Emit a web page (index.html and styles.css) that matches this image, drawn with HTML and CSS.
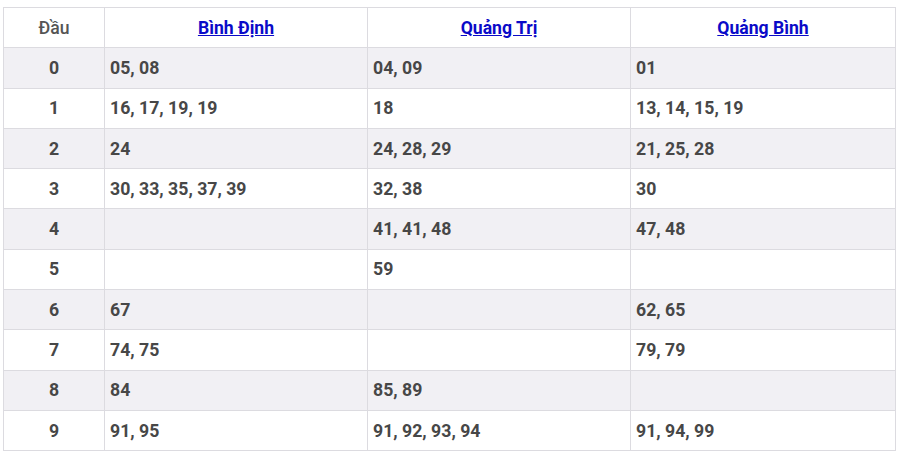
FILE: index.html
```html
<!DOCTYPE html>
<html lang="vi">
<head>
<meta charset="utf-8">
<link rel="stylesheet" href="styles.css">
</head>
<body>
<div class="wrap">
<table class="loto">
  <colgroup>
    <col class="c-dau">
    <col class="c-prov">
    <col class="c-prov">
    <col>
  </colgroup>
  <thead>
    <tr>
      <th class="dau">Đầu</th>
      <th><a href="#">Bình Định</a></th>
      <th><a href="#">Quảng Trị</a></th>
      <th><a href="#">Quảng Bình</a></th>
    </tr>
  </thead>
  <tbody>
    <tr><td class="num">0</td><td>05, 08</td><td>04, 09</td><td>01</td></tr>
    <tr><td class="num">1</td><td>16, 17, 19, 19</td><td>18</td><td>13, 14, 15, 19</td></tr>
    <tr><td class="num">2</td><td>24</td><td>24, 28, 29</td><td>21, 25, 28</td></tr>
    <tr><td class="num">3</td><td>30, 33, 35, 37, 39</td><td>32, 38</td><td>30</td></tr>
    <tr><td class="num">4</td><td></td><td>41, 41, 48</td><td>47, 48</td></tr>
    <tr><td class="num">5</td><td></td><td>59</td><td></td></tr>
    <tr><td class="num">6</td><td>67</td><td></td><td>62, 65</td></tr>
    <tr><td class="num">7</td><td>74, 75</td><td></td><td>79, 79</td></tr>
    <tr><td class="num">8</td><td>84</td><td>85, 89</td><td></td></tr>
    <tr><td class="num">9</td><td>91, 95</td><td>91, 92, 93, 94</td><td>91, 94, 99</td></tr>
  </tbody>
</table>
</div>
</body>
</html>
```
FILE: styles.css
```css
html, body {
  margin: 0;
  padding: 0;
  background: #ffffff;
}
body {
  font-family: Roboto, "Noto Sans", Arial, sans-serif;
}
.wrap {
  padding: 7px 0 0 3px;
  width: 893px;
}
.loto {
  width: 893px;
  border-collapse: collapse;
  table-layout: fixed;
  color: #474747;
  font-size: 17.7px;
}
.c-dau { width: 101px; }
.c-prov { width: 263px; }
.loto th, .loto td {
  border: 1px solid #dcdbe0;
  height: 39.3px;
  padding: 0 5px;
  vertical-align: middle;
}
.loto th {
  font-weight: 500;
  text-align: center;
  background: #fff;
  font-size: 17.6px;
}
.loto th.dau {
  color: #555;
}
.loto th a {
  color: #0a0ac8;
  font-weight: 700;
  text-decoration: underline;
}
.loto td {
  font-weight: 700;
  text-align: left;
}
.loto td.num {
  text-align: center;
}
.loto tbody tr:nth-child(odd) td {
  background: #f1f0f4;
}
```
